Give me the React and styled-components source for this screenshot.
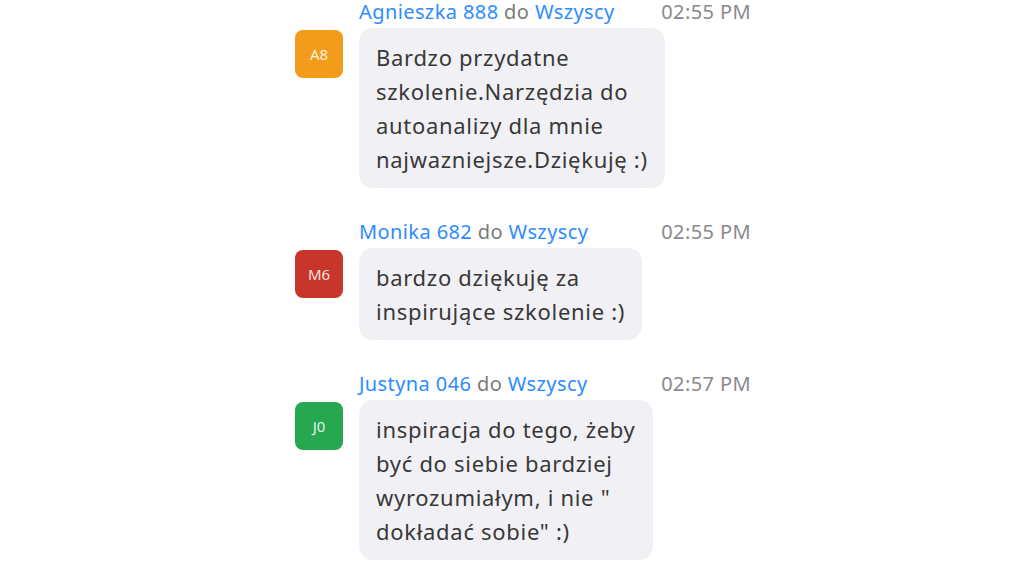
import React from 'react';
import styled, { createGlobalStyle } from 'styled-components';

const GlobalStyle = createGlobalStyle`
  html, body {
    margin: 0;
    padding: 0;
    background: #ffffff;
  }
  body {
    font-family: "Noto Sans", "Open Sans", sans-serif;
  }
`

const Page = styled.div`
  width: 1024px;
  height: 576px;
  overflow: hidden;
  background: #fff;
  display: flex;
  justify-content: flex-start;
`

const Chat = styled.div`
  margin-left: 295px;
  width: 456px;
  display: flex;
  flex-direction: column;
  gap: 32px;
`

const Message = styled.div`
  display: flex;
  flex-direction: column;
`

const Header = styled.div`
  display: flex;
  align-items: center;
  justify-content: space-between;
  height: 24px;
  margin-left: 64px;
  margin-bottom: 4px;
  font-size: 20px;
  line-height: 24px;
  letter-spacing: 0.4px;
`

const Names = styled.div`
  color: #7a7a7a;
  white-space: nowrap;
`

const Name = styled.span`
  color: #2d8cff;
`

const Time = styled.span`
  color: #8a8a8a;
`

const Body = styled.div`
  display: flex;
  align-items: flex-start;
  gap: 16px;
`

const Avatar = styled.div`
  width: 48px;
  height: 48px;
  flex-shrink: 0;
  margin-top: 2px;
  border-radius: 8px;
  background: ${p => p.color};
  color: rgba(255, 255, 255, 0.88);
  font-size: 15px;
  display: flex;
  align-items: center;
  justify-content: center;
`

const Bubble = styled.div`
  background: #f1f1f5;
  border-radius: 14px;
  padding: 12px 17px 12px 17px;
  color: #383838;
  font-size: 22px;
  line-height: 34px;
  letter-spacing: 0.7px;
`

const Line = styled.div`
  white-space: nowrap;
`

const messages = [
  {
    name: 'Agnieszka 888',
    time: '02:55 PM',
    initials: 'A8',
    color: '#f39c1b',
    lines: [
      'Bardzo przydatne',
      'szkolenie.Narzędzia do',
      'autoanalizy dla mnie',
      'najwazniejsze.Dziękuję :)',
    ],
  },
  {
    name: 'Monika 682',
    time: '02:55 PM',
    initials: 'M6',
    color: '#c8362b',
    lines: ['bardzo dziękuję za', 'inspirujące szkolenie :)'],
  },
  {
    name: 'Justyna 046',
    time: '02:57 PM',
    initials: 'J0',
    color: '#27a750',
    lines: [
      'inspiracja do tego, żeby',
      'być do siebie bardziej',
      'wyrozumiałym, i nie "',
      'dokładać sobie" :)',
    ],
  },
]

const App = () => {
  return (
    <>
      <GlobalStyle />
      <Page>
        <Chat>
          {messages.map((m) => (
            <Message key={m.name}>
              <Header>
                <Names>
                  <Name>{m.name}</Name> do <Name>Wszyscy</Name>
                </Names>
                <Time>{m.time}</Time>
              </Header>
              <Body>
                <Avatar color={m.color}>{m.initials}</Avatar>
                <Bubble>
                  {m.lines.map((l, i) => (
                    <Line key={i}>{l}</Line>
                  ))}
                </Bubble>
              </Body>
            </Message>
          ))}
        </Chat>
      </Page>
    </>
  );
};

export default App;
